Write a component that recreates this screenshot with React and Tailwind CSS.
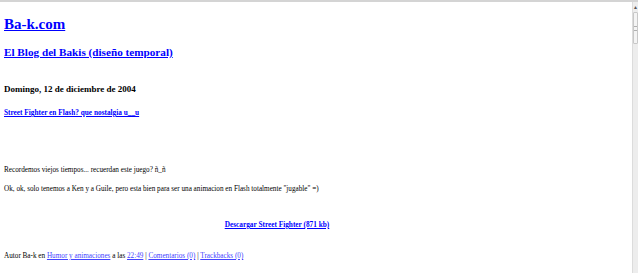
import React from "react";

// Old blogger post page, rendered small
function Scrollbar() {
  return (
    <div className="w-[6px] bg-[#ededed] border-l border-[#dcdcdc] flex flex-col items-center">
      <div className="mt-[3px] text-[5px] leading-[5px] text-[#555]">▲</div>
      <div className="mt-[2px] w-[5px] h-[32px] bg-[#f4f4f4] border border-[#c8c8c8] rounded-[1px] flex items-center justify-center">
        <div className="w-[3px] h-[5px] border-y border-[#b0b0b0]"></div>
      </div>
    </div>
  );
}

export default function App() {
  return (
    <div
      className="w-[638px] h-[273px] overflow-hidden bg-white border-t-2 border-[#d4d4d4] flex text-black"
      style={{ fontFamily: '"Liberation Serif", "Times New Roman", serif' }}
    >
      <div className="flex-1 pl-[4px]">
        <div className="w-[546px]">
          <h1 className="mt-[12px] text-[15px] leading-[20px] font-bold">
            <a href="#" className="text-[#0000ff] underline">Ba-k.com</a>
          </h1>
          <h2 className="mt-[10px] text-[11.2px] leading-[16px] font-bold">
            <a href="#" className="text-[#0000ff] underline">El Blog del Bakis (diseño temporal)</a>
          </h2>

          <h3 className="mt-[23px] text-[9px] leading-[12px] font-bold">
            Domingo, 12 de diciembre de 2004
          </h3>
          <h4 className="mt-[13px] text-[7.3px] leading-[10px] font-bold">
            <a href="#" className="text-[#0000ff] underline">Street Fighter en Flash? que nostalgia u__u</a>
          </h4>

          <p className="mt-[47px] text-[7.2px] leading-[10px]">
            Recordemos viejos tiempos... recuerdan este juego? ñ_ñ
          </p>
          <p className="mt-[9px] text-[7.2px] leading-[10px]">
            Ok, ok, solo tenemos a Ken y a Guile, pero esta bien para ser una animacion en Flash totalmente "jugable" =)
          </p>
          <p className="mt-[26px] text-[7.3px] leading-[10px] font-bold text-center">
            <a href="#" className="text-[#0000ff] underline">Descargar Street Fighter (871 kb)</a>
          </p>

          <p className="mt-[21px] text-[7.2px] leading-[10px]">
            Autor Ba-k en{" "}
            <a href="#" className="text-[#4444ff] underline">Humor y animaciones</a> a las{" "}
            <a href="#" className="text-[#4444ff] underline">22:49</a> |{" "}
            <a href="#" className="text-[#4444ff] underline">Comentarios (0)</a> |{" "}
            <a href="#" className="text-[#4444ff] underline">Trackbacks (0)</a>
          </p>
        </div>
      </div>
      <Scrollbar />
    </div>
  );
}
